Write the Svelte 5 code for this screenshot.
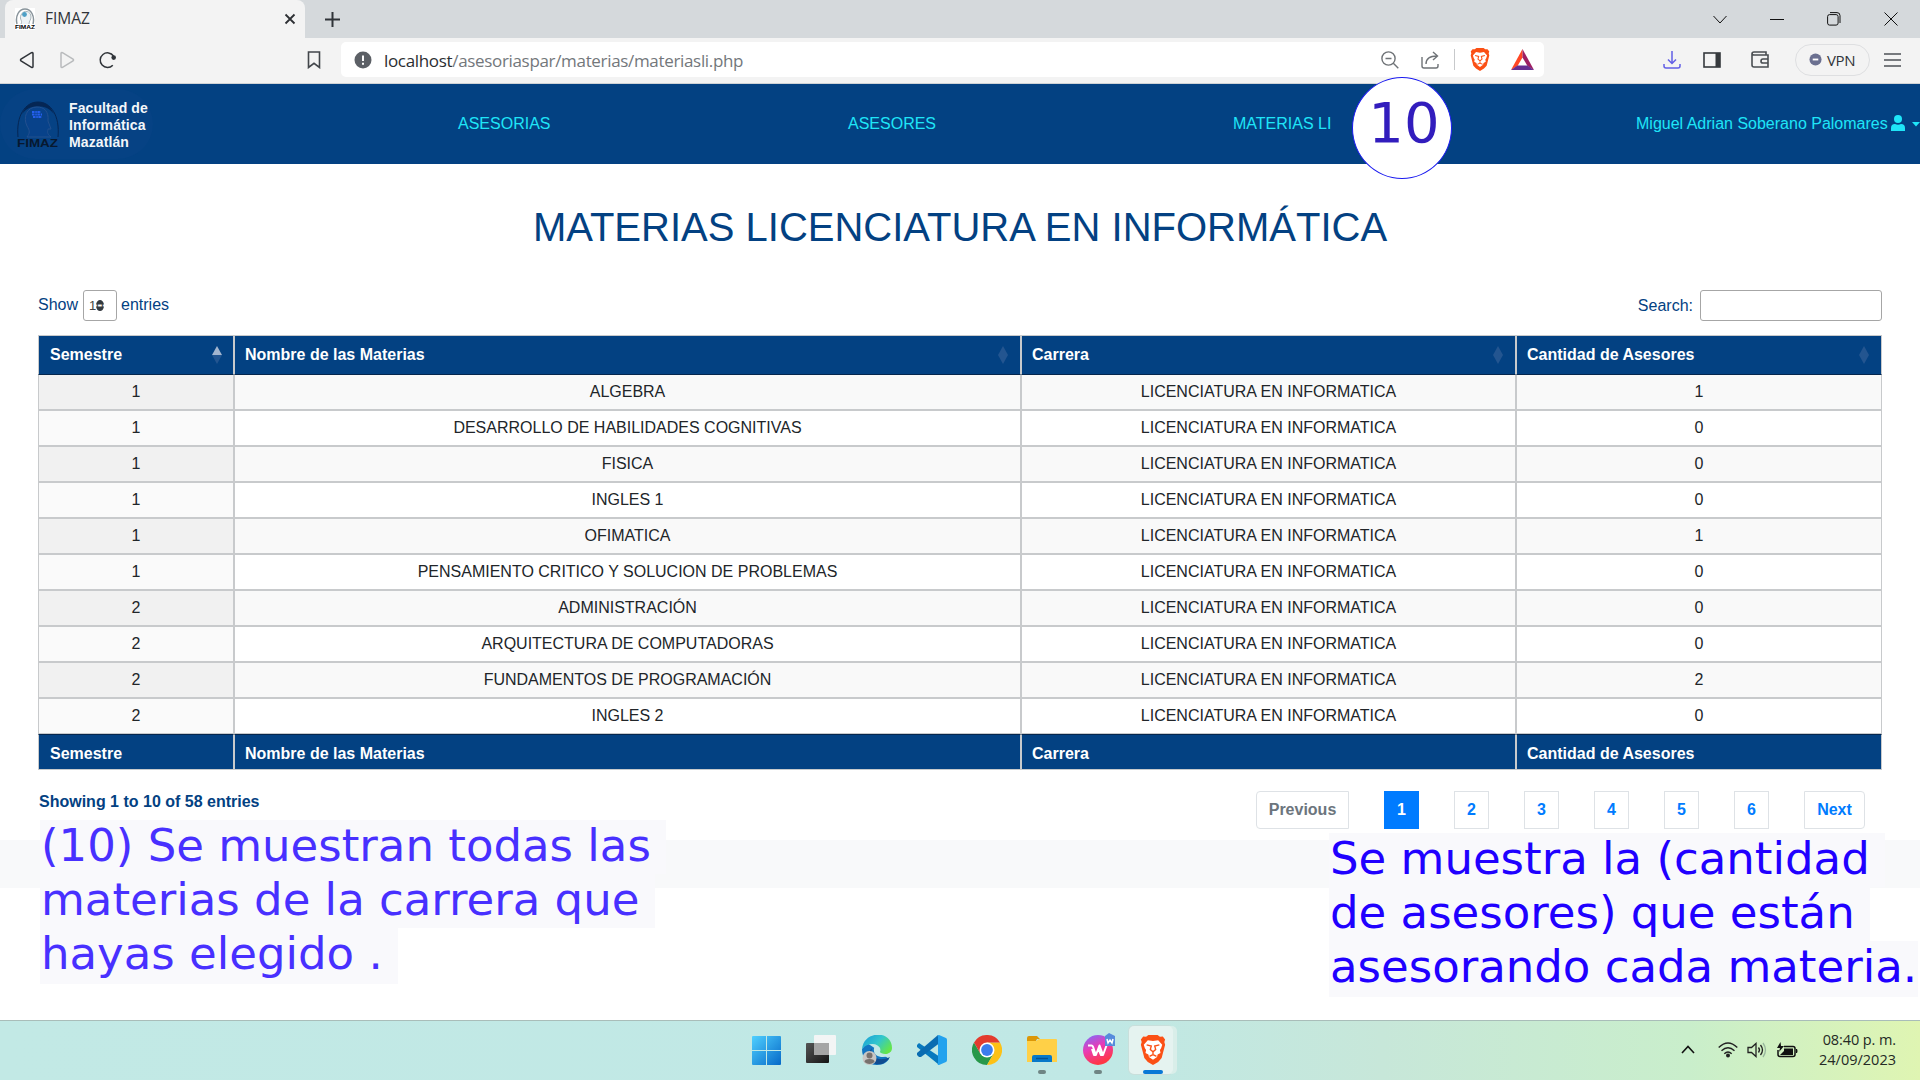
<script lang="ts">
  const rows: [number, string, number][] = [
    [1, 'ALGEBRA', 1],
    [1, 'DESARROLLO DE HABILIDADES COGNITIVAS', 0],
    [1, 'FISICA', 0],
    [1, 'INGLES 1', 0],
    [1, 'OFIMATICA', 1],
    [1, 'PENSAMIENTO CRITICO Y SOLUCION DE PROBLEMAS', 0],
    [2, 'ADMINISTRACIÓN', 0],
    [2, 'ARQUITECTURA DE COMPUTADORAS', 0],
    [2, 'FUNDAMENTOS DE PROGRAMACIÓN', 2],
    [2, 'INGLES 2', 0]
  ];
  const heads = ['Semestre', 'Nombre de las Materias', 'Carrera', 'Cantidad de Asesores'];
  const pages = ['1', '2', '3', '4', '5', '6'];
</script>

{#snippet lion()}
  <path d="M5 1.500 7 0h8l2 1.500 2.500-.2L21.500 4l-.7 2 .7 2.500-3 11.500-3 3.300L11 26l-4.500-2.700-3-3.300L.5 8.500 1.200 6 .5 4l2-2.700z" fill="#fb5015" />
  <path d="m6.500 4.500 4.500.8 4.500-.8 3.500 4-1 3-1 1.500.5 2.500-2.500 1.500L14.500 19 11 21.500 7.500 19 7 17l-2.500-1.500.5-2.500-1-1.500-1-3z" fill="#fff" />
  <path d="m5.500 8.500 4 1-.8 3 2.300 2L13.300 12.500l-.8-3 4-1M11 14v3M8 18.500l3-1.500 3 1.500" fill="none" stroke="#fb5015" stroke-width="1.200" />
{/snippet}

<div class="screen">
  <div class="tabs">
    <div class="tab">
      <svg class="fav" width="20" height="22" viewBox="0 0 20 22"><rect width="20" height="22" fill="#fff" /><path d="M2 16C0 8 4 1 10 1s10 7 8 15" fill="none" stroke="#89949b" stroke-width="1.500" /><path d="M6 16c2-4-2-4 0-9 3-6 10-4 10 2 0 3-2 4-2 7" fill="#edf2f5" stroke="#a8b4ba" /><circle cx="9.500" cy="6.500" r="2.400" fill="#4d9fc6" /><text x="0" y="21" textLength="20" lengthAdjust="spacingAndGlyphs" class="favtext">FIMAZ</text></svg>
      <span class="tabname">FIMAZ</span>
      <svg width="12" height="12" viewBox="0 0 12 12"><path d="m1.500 1.500 9 9m0-9-9 9" stroke="#2d3034" stroke-width="1.800" /></svg>
    </div>
    <svg class="plus" width="15" height="15" viewBox="0 0 15 15"><path d="M7.500 0v15M0 7.500h15" stroke="#303439" stroke-width="2" /></svg>
    <div class="wincontrols">
      <svg width="14" height="14" viewBox="0 0 14 14"><path d="m.5 4 6.500 7 6.500-7" /></svg>
      <svg width="14" height="14" viewBox="0 0 14 14"><path d="M0 7.500h14" /></svg>
      <svg width="14" height="14" viewBox="0 0 14 14"><rect x=".6" y="2.600" width="10.500" height="10.500" rx="2" /><path d="M3 .6h7a3 3 0 0 1 3 3V11" /></svg>
      <svg width="14" height="14" viewBox="0 0 14 14"><path d="m.5.5 13 13m0-13-13 13" /></svg>
    </div>
  </div>

  <div class="toolbar">
    <div class="nav-icons">
      <svg width="16" height="18" viewBox="0 0 16 18"><path d="M14 2.500v13q0 1.500-1.500.8L2 10q-1-1 0-2l10.500-6.300Q14 1 14 2.500z" fill="none" stroke="#303439" stroke-width="1.500" /></svg>
      <svg width="16" height="18" viewBox="0 0 16 18"><path d="M2 2.500v13q0 1.500 1.500.8L14 10q1-1 0-2L3.500 1.700Q2 1 2 2.500z" fill="none" stroke="#b9bbbd" stroke-width="1.500" /></svg>
      <svg width="18" height="18" viewBox="0 0 18 18"><path d="M13.800 14.200A7.300 7.300 0 1 1 14.500 5" fill="none" stroke="#303439" stroke-width="1.500" /><circle cx="14.700" cy="6.600" r="2.300" fill="#303439" /></svg>
    </div>
    <svg class="bookmark" width="14" height="18" viewBox="0 0 14 18"><path d="M1.500 1h11v15.500L7 12.300l-5.500 4.200z" fill="none" stroke="#42464b" stroke-width="1.600" /></svg>
    <div class="address">
      <svg width="18" height="18" viewBox="0 0 18 18"><circle cx="9" cy="9" r="8.500" fill="#5c6066" /><path d="M9 4.500v5.500m0 1.700v2" stroke="#fff" stroke-width="2" /></svg>
      <span class="url"><b>localhost</b>/asesoriaspar/materias/materiasli.php</span>
      <div class="addr-icons">
        <svg width="18" height="18" viewBox="0 0 18 18"><circle cx="7.500" cy="7.500" r="6.600" /><path d="m12.300 12.300 5 5M4.500 7.500h6" /></svg>
        <svg width="18" height="18" viewBox="0 0 18 18"><path d="M1 6v9q0 2 2 2h12q2 0 2-2v-2M5 13c0-6 4-8 11-8M12 1l4.500 4-4.500 4" /></svg>
        <i></i>
        <svg class="plain brave" width="20" height="23" viewBox="0 0 22 26">{@render lion()}</svg>
        <svg class="plain" width="23" height="21" viewBox="0 0 23 21"><path d="M11.500 0 0 21l6.500-4 5-8.500z" fill="#ff4724" /><path d="M11.500 0 23 21l-6.500-4-5-8.500z" fill="#9e1f63" /><path d="M0 21h23l-6.500-4.500h-10z" fill="#662d91" /></svg>
      </div>
    </div>
    <div class="tools">
      <svg width="18" height="18" viewBox="0 0 18 18"><path d="M9 0v12M5 8.500l4 4 4-4M1 13v2q0 2 2 2h12q2 0 2-2v-2" fill="none" stroke="#625fe6" stroke-width="1.500" /></svg>
      <svg width="18" height="16" viewBox="0 0 18 16"><rect x="1" y="1" width="16" height="14" fill="none" stroke="#35393d" stroke-width="1.600" /><path d="M12.500 1H17v14h-4.500z" fill="#35393d" /></svg>
      <svg width="18" height="17" viewBox="0 0 18 17"><path d="M15 4V1H3Q1 1 1 3v11q0 2 2 2h14V4H3Q1 4 1 2.500M17 8h-5q-2 0-2 2.200 0 1.800 2 1.800h5" fill="none" stroke="#4a4e52" stroke-width="1.600" /></svg>
      <div class="vpn"><svg width="13" height="13" viewBox="0 0 14 14"><circle cx="7" cy="7" r="6.500" fill="#6b7090" /><path d="M4 7h6" stroke="#fff" stroke-width="2" /></svg><span>VPN</span></div>
      <svg width="18" height="14" viewBox="0 0 18 14"><path d="M0 1h17M0 7h17M0 13h17" stroke="#4e5257" stroke-width="1.500" /></svg>
    </div>
  </div>

  <nav>
    <div class="brand">
      <svg width="42" height="46" viewBox="0 0 42 46"><path d="M1 36C-1 15 8 1 21 1s22 14 20 35" fill="none" stroke="#052654" stroke-width="1" /><path d="M5 13C9 4 14 1 21 1s12 3 16 12C32 7 28 5.500 21 5.500S10 7 5 13z" fill="#052654" /><path d="M8 36c5-4 3-6 3-8H8l3-8C10 10 15 6 22 6c11 0 14 11 10 19-3 5-3 7 0 11z" fill="#08428a" stroke="#23508f" transform="matrix(-1 0 0 1 42 0)" /><path d="M15 11h9M15 13.500h10M16 16h9" fill="none" stroke="#2460ee" stroke-width="1.800" stroke-dasharray="2.500 .8 1.500 .6" /><text x="0" y="45.500" textLength="41" lengthAdjust="spacingAndGlyphs" class="logotext">FIMAZ</text></svg>
      <div class="brandname">Facultad de<br />Informática<br />Mazatlán</div>
    </div>
    <a class="n1">ASESORIAS</a>
    <a class="n2">ASESORES</a>
    <a class="n3">MATERIAS LI</a>
    <a class="user">Miguel Adrian Soberano Palomares<svg width="14" height="16" viewBox="0 0 14 16"><circle cx="7" cy="4" r="4" /><path d="M0 16v-3q0-4 4-4 3 1.400 6 0 4 0 4 4v3z" /></svg><svg class="caret" width="8" height="5" viewBox="0 0 8 5"><path d="M0 0h8L4 4.500z" /></svg></a>
    <div class="badge">10</div>
  </nav>

  <main>
    <h1>MATERIAS LICENCIATURA EN INFORMÁTICA</h1>
    <div class="controls">
      <div class="length"><span class="word">Show</span> <span class="select">10<svg width="8" height="11" viewBox="0 0 8 11"><path d="M0 4.500Q1 0 4 0t4 4.500zM0 6.500h8Q7 11 4 11T0 6.500z" fill="#343a40" /></svg></span> <span class="word">entries</span></div>
      <div class="search">Search: <span class="input"></span></div>
    </div>
    <table>
      <colgroup><col class="c1" /><col class="c2" /><col class="c3" /><col class="c4" /></colgroup>
      <thead>
        <tr>
          {#each heads as h, i}
            <th><div class="headcell"><span>{h}</span><svg width="10" height="18" viewBox="0 0 10 18"><path d="M5 0 0 9h10z" fill={i === 0 ? '#a3b5cf' : '#235590'} /><path d="M0 9h10L5 18z" fill="#235590" /></svg></div></th>
          {/each}
        </tr>
      </thead>
      <tbody>
        {#each rows as [sem, name, count]}
          <tr><td>{sem}</td><td>{name}</td><td>LICENCIATURA EN INFORMATICA</td><td>{count}</td></tr>
        {/each}
      </tbody>
      <tfoot>
        <tr>{#each heads as h}<th>{h}</th>{/each}</tr>
      </tfoot>
    </table>
    <div class="below">
      <strong>Showing 1 to 10 of 58 entries</strong>
      <div class="pager">
        <span class="prev">Previous</span>
        {#each pages as p}<span class:active={p === '1'}>{p}</span>{/each}
        <span class="next">Next</span>
      </div>
    </div>
    <div class="band"></div>
    <div class="note left"><span class="l1">(10) Se muestran todas las</span><span class="l2">materias de la carrera que</span><span class="l3">hayas elegido .</span></div>
    <div class="note right"><span class="r1">Se muestra la (cantidad</span><span class="r2">de asesores) que están</span><span class="r3">asesorando cada materia.</span></div>
  </main>

  <footer>
    <div class="apps">
      <div class="app"><svg width="29" height="29" viewBox="0 0 29 29"><defs><linearGradient id="win" x2="1" y2="1"><stop stop-color="#4fd0ff" /><stop offset="1" stop-color="#0669c8" /></linearGradient></defs><path d="M1 0h13v14H0V1q0-1 1-1zM15 0h13q1 0 1 1v13H15zM0 15h14v14H1q-1 0-1-1zM15 15h14v13q0 1-1 1H15z" fill="url(#win)" /></svg></div>
      <div class="app"><svg width="30" height="30" viewBox="0 0 30 30"><defs><linearGradient id="tv" x2="1" y2="1"><stop stop-color="#555" /><stop offset="1" stop-color="#151515" /></linearGradient></defs><rect y="8" width="23" height="20" rx="1" fill="url(#tv)" /><rect x="8" y="0" width="22" height="20" rx="1" fill="#f5f5f5" opacity=".95" /><path d="M8 8h15v12H8z" fill="#a5a5a5" /></svg></div>
      <div class="app"><svg width="30" height="30" viewBox="0 0 30 30"><defs><linearGradient id="edge" x2="1" y2=".6"><stop stop-color="#159bd8" /><stop offset=".55" stop-color="#32c6cd" /><stop offset="1" stop-color="#64e54b" /></linearGradient></defs><path d="M0 14C0 24 6 30 15 30c6 0 10-3 12-6L14 14 5 8z" fill="#1175c2" /><path d="M0 14C2-5 30-5 30 13c0 6-7 8-11 6-3-1 0-2-1-5-2-7-13-6-18 0z" fill="url(#edge)" /><path d="M10 13c-3 8 6 15 18 9-5 9-15 9-19 4-3-5-2-10 1-13z" fill="#104c91" /><path d="M12 16c-1-5 4-6 6-3 1 3-1 4 1 5 4 2 7 1 10-1-1 3-2 3-2 4-9 3-15-1-15-5z" fill="#c3e8e7" /><circle cx="7.500" cy="23" r="7" fill="#c8c6c4" /><circle cx="7.500" cy="20.500" r="3" fill="#77716e" /><path d="M2.500 27q0-3 5-3t5 3q-5 4-10 0z" fill="#77716e" /></svg></div>
      <div class="app"><svg width="30" height="30" viewBox="0 0 30 30"><path d="m2 8-2 2v2l21 17 2-7z" fill="#0879be" /><path d="m2 22-2-2v-2L21 0l3 7L4 22z" fill="#0a6cb1" /><path d="m22 0 7 3q1 .5 1 2v20q0 1.500-1 2l-7 3q-2 0-1-2V2q-1-2 1-2z" fill="#23a2ee" /></svg></div>
      <div class="app"><svg width="30" height="30" viewBox="0 0 30 30"><path d="M2 7.500A15 15 0 0 0 15 30l6.500-11.300L15 15 8.500 18.700z" fill="#27984a" /><path d="M28 7.500A15 15 0 0 1 15 30l6.500-11.300L15 7.500z" fill="#fdc116" /><path d="M2 7.500A15 15 0 0 1 28 7.500H15L8.500 18.700z" fill="#e33b2e" /><circle cx="15" cy="15" r="7.500" fill="#fff" /><circle cx="15" cy="15" r="5.900" fill="#3b7ded" /></svg></div>
      <div class="app dot"><svg width="30" height="28" viewBox="0 0 30 28"><path d="M0 2Q0 0 2 0h8l3 3h-3l-2 4H0z" fill="#dc9708" /><path d="M0 5h9l3-2h17q1 0 1 1v22H0z" fill="#ffd047" /><path d="M5 26v-5q0-2 2-2h16q2 0 2 2v5z" fill="#0879c9" /><path d="M9 22.500h12" stroke="#055193" stroke-width="1.500" /></svg></div>
      <div class="app dot"><svg class="wps" width="32" height="32" viewBox="0 0 32 32"><defs><linearGradient id="wps" y2="1" x2=".4"><stop stop-color="#7870ff" /><stop offset=".5" stop-color="#e93ab5" /><stop offset="1" stop-color="#ff3645" /></linearGradient></defs><circle cx="15" cy="17" r="15" fill="url(#wps)" /><path d="M5 12.500h3.500q1 0 1.400 1l3 8.500 3.600-9.500 3.500 9.500 3.500-9.500M9 16l2 6h2m2.500-6 2.500 6h2" fill="none" stroke="#fff" stroke-width="2" stroke-linejoin="round" /><path d="m22 3 4-3 6 3v10H22z" fill="#568bdc" /><path d="m24 6 1 4 2-3 2 3 1-4" fill="none" stroke="#fff" stroke-width="1.500" /></svg></div>
      <div class="app current"><svg width="26" height="30" viewBox="0 0 22 26">{@render lion()}</svg></div>
    </div>
    <div class="tray">
      <svg class="chev" width="14" height="9" viewBox="0 0 14 9"><path d="m1 8 6-6.500L13 8" fill="none" stroke="#111" stroke-width="1.600" /></svg>
      <svg class="wifi" width="20" height="16" viewBox="0 0 20 16"><path d="M.7 5.500q9.300-9 18.600 0M3.500 8.800q6.500-6 13 0M6.300 11.800q3.700-3.500 7.400 0" fill="none" stroke="#222" stroke-width="1.400" /><circle cx="10" cy="13.500" r="2" fill="#222" /></svg>
      <svg class="vol" width="20" height="16" viewBox="0 0 20 16"><path d="M1 5.500v5h3.500L9 14.500v-13L4.500 5.500z M11.500 5.500q2 2.500 0 5M13.500 3q4 5 0 10" fill="none" stroke="#222" stroke-width="1.300" /><path d="M16 1q5 7 0 14" fill="none" stroke="#98b69d" stroke-width="1.300" /></svg>
      <svg width="21" height="16" viewBox="0 0 21 16"><path d="M7 4.500h9q2 0 2 2v6q0 2-2 2H3q-2 0-2-2V8" fill="none" stroke="#111" stroke-width="1.500" /><path d="M7 6.500h9V13H3l4-4zM19 7h1q1 2 0 4h-1zM3.500 0 0 6h3L2 10l5-6H4z" fill="#111" /></svg>
      <div class="clock"><span class="time">08:40 p. m.</span><span class="date">24/09/2023</span></div>
    </div>
  </footer>
</div>

<style>
  :global(body) { margin: 0; overflow: hidden; }
  .screen { width: 1920px; height: 1080px; overflow: hidden; display: flex; flex-direction: column; background: #fff; font-family: "Liberation Sans", Arial, sans-serif; font-size: 16px; box-sizing: border-box; }
  .screen * { box-sizing: border-box; }
  svg { display: block; flex: none; }
  .tabs { height: 38px; background: #d5d9dc; display: flex; align-items: center; padding-left: 5px; flex: none; }
  .tab { width: 300px; height: 38px; background: #f3f3f3; border-radius: 8px 8px 0 0; display: flex; align-items: center; padding: 0 9px 0 10px; font: 15.500px "Open Sans", sans-serif; color: #303439; }
  .favtext { font: bold 5px "Liberation Sans", sans-serif; }
  .tabname { margin-left: 10px; flex: 1; padding-bottom: 2px; }
  .plus { margin-left: 20px; }
  .wincontrols { margin-left: auto; display: flex; gap: 43px; padding-right: 22px; }
  .wincontrols svg { fill: none; stroke: #111; stroke-width: 1; }
  .toolbar { height: 46px; background: #f3f3f3; border-bottom: 1px solid #d0d3d6; display: flex; align-items: center; flex: none; padding: 0 18px 2px 19px; }
  .nav-icons { display: flex; gap: 24px; }
  .bookmark { margin-left: 190px; }
  .address { margin-left: 20px; width: 1203px; height: 35px; background: #fff; border-radius: 5px; display: flex; align-items: center; padding: 0 10px 0 13px; }
  .url { margin-left: 12px; padding-top: 1px; font: 17px "Open Sans", sans-serif; letter-spacing: -0.330px; color: #73777b; }
  .url b { color: #2b2e32; font-weight: 400; }
  .addr-icons { margin-left: auto; display: flex; align-items: center; }
  .addr-icons svg { fill: none; stroke: #6f7377; stroke-width: 1.400; margin-right: 22px; }
  .addr-icons i { width: 1px; height: 21px; background: #c7c9cb; margin-left: -7px; margin-right: 15px; }
  .addr-icons svg.plain { stroke: none; margin: 0; }
  .addr-icons svg.brave { margin-right: 21px; }
  .tools { margin-left: auto; display: flex; align-items: center; }
  .tools > svg { margin-right: 22px; }
  .tools > svg:nth-of-type(2) { margin-right: 30px; }
  .tools > svg:nth-of-type(3) { margin-right: 26px; }
  .tools > svg:last-child { margin-right: 0; }
  .vpn { width: 75px; height: 32px; border: 1px solid #dedfe1; border-radius: 16px; display: flex; align-items: center; gap: 5px; padding-left: 13px; margin-right: 14px; font: 15px "Open Sans", sans-serif; letter-spacing: -0.400px; color: #303439; }
  nav { height: 80px; background: #034182; flex: none; display: flex; position: relative; color: #1fe5f8; line-height: 18px; }
  nav a { padding-top: 31px; white-space: nowrap; }
  .brand { width: 153px; margin-top: 5px; height: 70px; border-radius: 35px; background: #064284; display: flex; padding: 12px 0 0 17px; margin-right: 305px; }
  .logotext { font: bold 10px "Liberation Sans", sans-serif; fill: #07182f; }
  .brandname { margin-top: -1px; margin-left: 10px; color: #f4f7fa; font-size: 14px; letter-spacing: 0.100px; line-height: 17px; font-weight: bold; white-space: nowrap; }
  .n1 { width: 390px; }
  .n2 { width: 385px; }
  .n3 { width: 403px; }
  .user { display: flex; align-items: flex-start; }
  .user svg { fill: #1fe5f8; margin: 0 0 0 3px; }
  .user svg.caret { margin: 7px 0 0 7px; }
  .badge { position: absolute; left: 1352px; top: -7px; width: 100px; height: 102px; border: 1px solid #1a1af0; border-radius: 50%; background: #fff; color: #321dbd; font: 56px/88px "DejaVu Sans", sans-serif; text-align: center; padding: 1px 0 0 4px; }
  main { height: 856px; flex: none; padding: 0 38px; position: relative; }
  h1 { margin: 0; padding-top: 39px; height: 126px; font-size: 40px; line-height: 48px; font-weight: 400; color: #034182; text-align: center; white-space: nowrap; }
  .controls { display: flex; justify-content: space-between; color: #034182; height: 45px; align-items: flex-start; }
  .length, .search { display: flex; align-items: center; height: 31px; }
  .word { padding-bottom: 2px; }
  .select { width: 34px; height: 31px; border: 1px solid #a6a6a6; border-radius: 3px; margin: 0 4px 0 5px; font: 13px "Liberation Sans", sans-serif; display: flex; align-items: center; padding-left: 5px; color: #444; position: relative; }
  .select svg { position: absolute; left: 12px; top: 9px; }
  .input { width: 182px; height: 31px; border: 1px solid #a6a6a6; border-radius: 3px; margin-left: 7px; }
  table { width: 1844px; table-layout: fixed; border-collapse: separate; border-spacing: 0; }
  .c1 { width: 196px; } .c2 { width: 787px; } .c3 { width: 495px; } .c4 { width: 366px; }
  th { background: #034182; color: #fff; text-align: left; border: 1px solid #c8cacc; font-size: 16px; line-height: 18px; height: 36px; padding: 3px 11px 0; }
  th:not(:first-child) { padding-left: 10px; padding-right: 12px; }
  thead th { height: 40px; border-bottom-color: #05264d; padding-top: 0; }
  tfoot th { border-top-color: #05264d; }
  .headcell { display: flex; justify-content: space-between; align-items: center; }
  tfoot th { padding-top: 4px; }
  td { height: 36px; padding: 0; line-height: 18px; text-align: center; border: 1px solid #c8cacc; color: #212529; background: #fff; }
  tr:first-child td { height: 35px; border-top: 0; }
  td:first-child { background: #fafafa; }
  tbody tr:nth-child(odd) td { background: #f9f9f9; }
  tbody tr:nth-child(odd) td:first-child { background: #f1f1f1; }
  .below { display: flex; justify-content: space-between; padding: 21px 17px 0 1px; font-weight: bold; }
  .below strong { color: #034182; padding-top: 2px; }
  .pager { display: flex; gap: 35px; }
  .pager span { width: 35px; height: 38px; border: 1px solid #dee2e6; color: #007bff; display: flex; align-items: center; justify-content: center; }
  .pager .prev { width: 93px; color: #6c757d; border-radius: 4px 0 0 4px; }
  .pager .next { width: 61px; border-radius: 0 4px 4px 0; }
  .pager .active { background: #007bff; border-color: #007bff; color: #fff; }
  .band { position: absolute; left: 0; right: 0; top: 676px; height: 48px; background: #f8f9fa; }
  .note { position: absolute; display: flex; flex-direction: column; align-items: flex-start; font: 45px/52px "DejaVu Sans", sans-serif; white-space: nowrap; }
  .note span { height: 54px; background: #f9f9fc; padding-left: 1px; }
  .note span:last-child { height: 56px; }
  .left { left: 40px; top: 656px; color: #4830ff; }
  .right { left: 1329px; top: 669px; color: #2000ff; }
  .l1 { width: 626px; } .l2 { width: 615px; } .l3 { width: 358px; }
  .r1 { width: 556px; } .r2 { width: 541px; } .r3 { width: 589px; }
  footer { height: 60px; flex: none; border-top: 1px solid #a9bdb9; background: linear-gradient(90deg, #c2e9e5 0%, #c0e8e5 58%, #c7e7d9 72%, #c9eecb 88%, #dff5b2 100%); display: flex; }
  .apps { display: flex; padding: 5px 0 0 742px; gap: 7.300px; }
  .app { width: 48px; height: 48px; border-radius: 5px; display: flex; align-items: center; justify-content: center; position: relative; }
  .dot::after, .current::after { content: ""; position: absolute; bottom: 0; left: 20px; width: 8px; height: 4px; border-radius: 2px; background: #6f8584; }
  .wps { margin-top: -2px; margin-left: 2px; }
  .current { width: 44px; margin-left: 0; padding-left: 3px; background: #e5f3f0; box-shadow: 4px 0 0 #d9eee9, 0 0 0 1px #c9dfdb; }
  .current::after { left: 14px; width: 20px; background: #0878d6; }
  .tray { margin-left: auto; display: flex; align-items: center; padding: 0 24px 2px 0; }
  .chev { margin-right: 23px; } .wifi { margin-right: 9px; } .vol { margin-right: 10px; }
  .clock { margin-left: 20px; width: 78px; display: flex; flex-direction: column; align-items: flex-end; font: 14.500px/20px "Open Sans", sans-serif; color: #252a25; white-space: nowrap; }
  .time { letter-spacing: -0.100px; }
</style>
